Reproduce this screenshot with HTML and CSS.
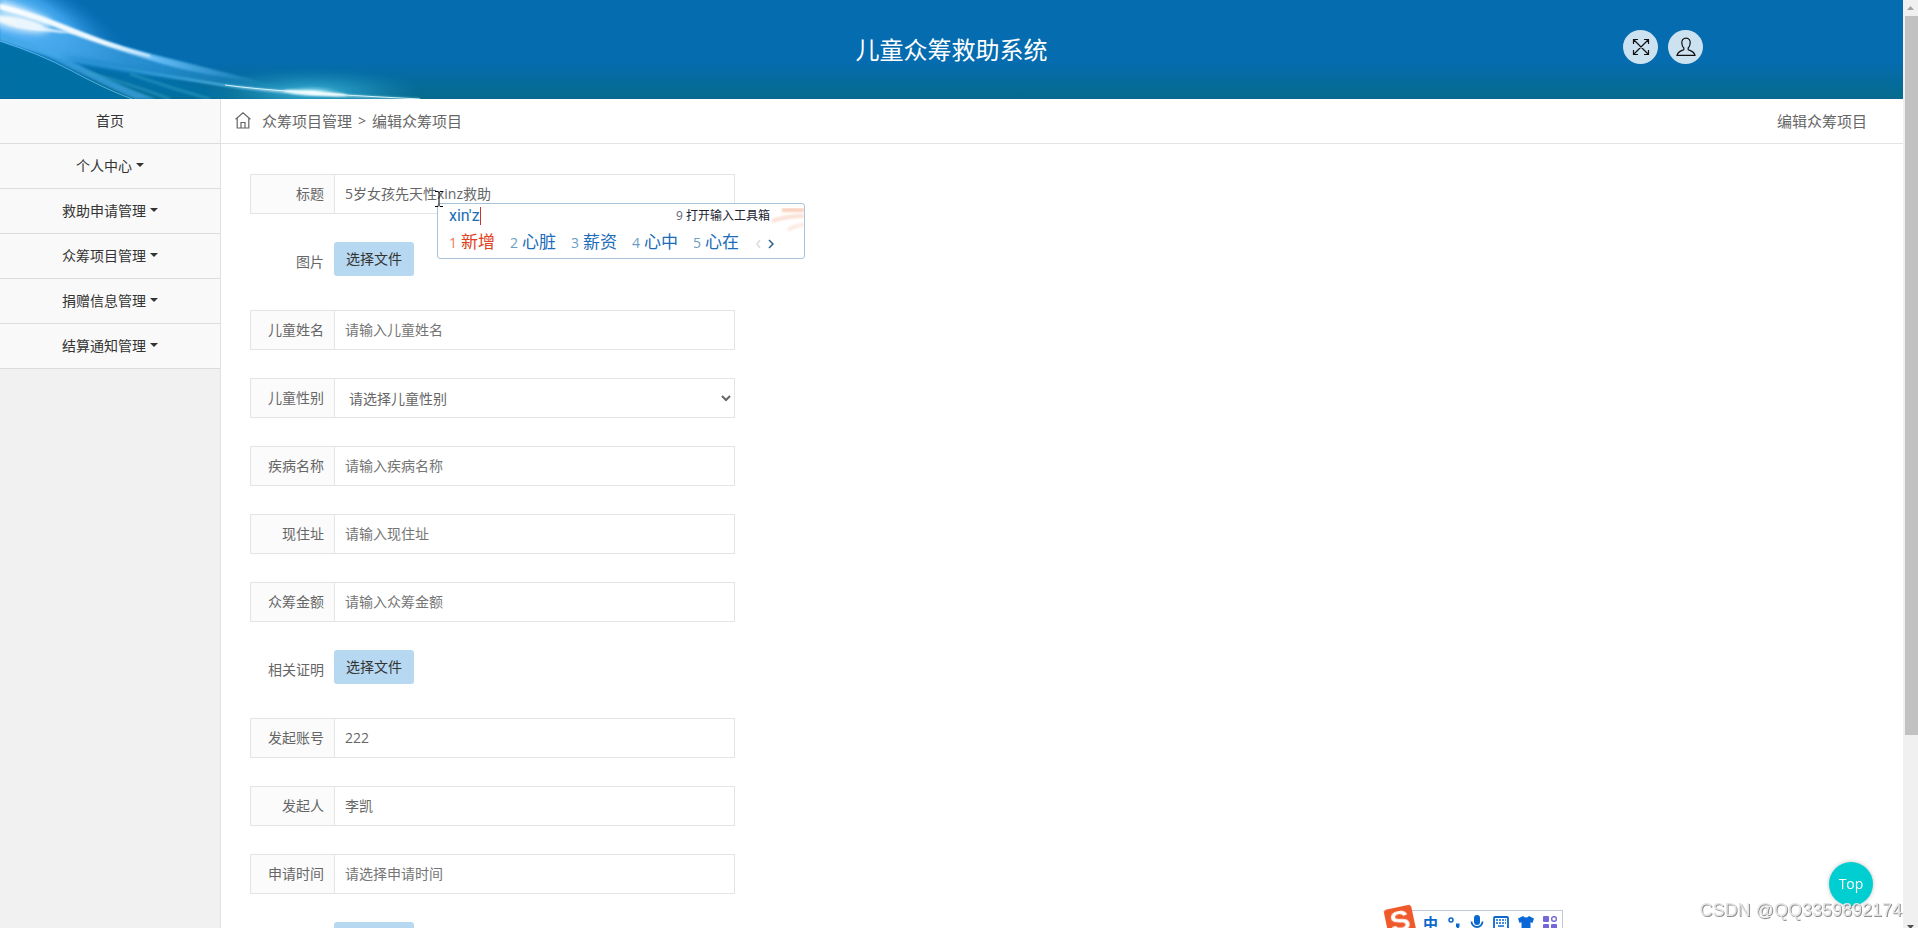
FILE: index.html
```html
<!DOCTYPE html>
<html lang="zh-CN">
<head>
<meta charset="utf-8">
<title>儿童众筹救助系统</title>
<link rel="stylesheet" href="styles.css">
</head>
<body>
<div class="page">
  <header class="header">
    <svg class="header-art" width="520" height="99" viewBox="0 0 520 99" aria-hidden="true">
      <defs>
        <filter id="soft1" x="-20%" y="-50%" width="140%" height="200%"><feGaussianBlur stdDeviation="1"/></filter>
        <filter id="soft3" x="-20%" y="-50%" width="140%" height="200%"><feGaussianBlur stdDeviation="3"/></filter>
        <radialGradient id="glow"><stop offset="0" stop-color="#7accff"/><stop offset=".5" stop-color="#3ea4ee" stop-opacity=".85"/><stop offset="1" stop-color="#1a80cc" stop-opacity="0"/></radialGradient>
        <radialGradient id="flare"><stop offset="0" stop-color="#b8f0fc"/><stop offset=".25" stop-color="#3cb4dc" stop-opacity=".65"/><stop offset="1" stop-color="#1a8cbc" stop-opacity="0"/></radialGradient>
        <linearGradient id="beam" x1="0" x2="1"><stop offset="0" stop-color="#fff"/><stop offset=".4" stop-color="#e0f4ff"/><stop offset=".6" stop-color="#64bcf6"/><stop offset="1" stop-color="#2a90c8" stop-opacity=".2"/></linearGradient>
        <linearGradient id="beam2" x1="0" x2="1"><stop offset="0" stop-color="#2c98e0" stop-opacity=".4"/><stop offset=".45" stop-color="#54b8e4"/><stop offset=".7" stop-color="#fff"/><stop offset="1" stop-color="#7cd4e8" stop-opacity=".4"/></linearGradient>
        <linearGradient id="veil" x1="0" x2="1"><stop offset="0" stop-color="#58b4fa" stop-opacity=".95"/><stop offset=".5" stop-color="#2c94d4" stop-opacity=".75"/><stop offset="1" stop-color="#1a84b4" stop-opacity=".1"/></linearGradient>
      </defs>
      <ellipse cx="24" cy="16" rx="110" ry="40" transform="rotate(24 24 16)" fill="url(#glow)"/>
      <path d="M0 42Q40 54 75 72Q108 90 130 99H0Z" fill="#0670a4" filter="url(#soft1)"/>
      <path d="M0 14Q60 20 100 40Q180 62 270 84L320 93Q190 84 110 70Q50 58 0 40Z" fill="url(#veil)" filter="url(#soft1)"/>
      <path d="M60 56Q120 66 170 78Q200 84 240 99H160Q110 78 60 56Z" fill="#0672b0" opacity=".55" filter="url(#soft3)"/>
      <path d="M0 40Q40 51 70 68Q110 88 135 99H156Q110 82 70 60Q35 44 0 32Z" fill="#43a8e5" opacity=".7" filter="url(#soft1)"/>
      <path d="M0 41Q40 54 70 70Q105 89 132 99" fill="none" stroke="#74ccf4" stroke-width="1" opacity=".7"/>
      <path d="M85 72Q125 82 170 99M130 74Q170 88 210 99" fill="none" stroke="#34a0c8" stroke-width="3" opacity=".5" filter="url(#soft1)"/>
      <ellipse cx="18" cy="23" rx="32" ry="8" transform="rotate(12 18 23)" fill="#c4e4fa" filter="url(#soft3)"/>
      <ellipse cx="20" cy="23" rx="24" ry="5" transform="rotate(12 20 23)" fill="#f2f8fa" filter="url(#soft1)"/>
      <path d="M16 20Q50 31 82 33Q50 34 16 26Z" fill="#e8f6ff" filter="url(#soft1)"/>
      <path d="M0 0Q20 6 50 20L50 26Q20 16 0 12Z" fill="#d4ecfc" filter="url(#soft3)"/>
      <path d="M0 4Q40 14 80 31Q125 49 170 59Q220 71 262 82Q190 74 150 60Q105 46 72 34Q35 18 0 9Z" fill="url(#beam)" filter="url(#soft1)"/>
      <path d="M0 7Q35 15 76 32Q110 46 150 56" stroke="#f4fbff" stroke-width="1.500" fill="none" filter="url(#soft1)"/>
      <ellipse cx="312" cy="92" rx="110" ry="24" fill="url(#flare)"/>
      <path d="M60 58Q145 72 210 83T420 99" stroke="url(#beam2)" stroke-width="2" fill="none" filter="url(#soft1)"/>
      <path d="M225 85Q275 92 420 99" stroke="#d4f4fc" stroke-width="1" fill="none"/>
      <ellipse cx="315" cy="93" rx="32" ry="2" transform="rotate(4 315 93)" fill="#f4ffff" filter="url(#soft1)"/>
    </svg>
    <h1 class="brand">儿童众筹救助系统</h1>
    <div class="actions">
      <button class="round" type="button" aria-label="全屏">
        <svg width="18" height="18" viewBox="0 0 18 18" fill="none" stroke="#111" stroke-width="1.200"><path d="M1.500 1.500L16.500 16.500M16.500 1.500L1.500 16.500M1.500 6V1.500H6M12 1.500h4.500V6M16.500 12v4.500H12M6 16.500H1.500V12"/></svg>
      </button>
      <button class="round" type="button" aria-label="用户">
        <svg width="20" height="20" viewBox="0 0 20 20" fill="none" stroke="#111" stroke-width="1.200"><path d="M10 1.200C7 1.200 5.600 3.200 5.800 6c.1 2.300.8 3.800 2 5v1.700C5.500 13.900 1.800 14.300 1 18.400h18c-.8-4.100-4.500-4.500-6.800-5.700V11c1.200-1.200 1.900-2.700 2-5 .2-2.800-1.200-4.800-4.200-4.800Z"/></svg>
      </button>
    </div>
  </header>

  <div class="body">
    <nav class="sidebar">
      <a class="item" href="#">首页</a>
      <a class="item has-sub" href="#">个人中心</a>
      <a class="item has-sub" href="#">救助申请管理</a>
      <a class="item has-sub" href="#">众筹项目管理</a>
      <a class="item has-sub" href="#">捐赠信息管理</a>
      <a class="item has-sub" href="#">结算通知管理</a>
    </nav>

    <main class="main">
      <div class="crumbs">
        <div class="trail">
          <svg class="home" width="16" height="17" viewBox="0 0 16 17" fill="none" stroke="#666" stroke-width="1.200"><path d="M.6 7.200L8 .9l7.400 6.300M2.200 6v10h11.600V6M6 16v-5.500h4V16"/></svg>
          <span>众筹项目管理</span><span class="sep">&gt;</span><span>编辑众筹项目</span>
        </div>
        <span>编辑众筹项目</span>
      </div>

      <form class="form">
        <div class="row box"><label for="title">标题</label><input id="title" type="text" value="5岁女孩先天性xinz救助"></div>
        <div class="row"><label for="pic">图片</label><button id="pic" class="file" type="button">选择文件</button></div>
        <div class="row box"><label for="name">儿童姓名</label><input id="name" type="text" placeholder="请输入儿童姓名"></div>
        <div class="row box"><label for="sex">儿童性别</label><select id="sex"><option>请选择儿童性别</option></select></div>
        <div class="row box"><label for="ill">疾病名称</label><input id="ill" type="text" placeholder="请输入疾病名称"></div>
        <div class="row box"><label for="addr">现住址</label><input id="addr" type="text" placeholder="请输入现住址"></div>
        <div class="row box"><label for="sum">众筹金额</label><input id="sum" type="text" placeholder="请输入众筹金额"></div>
        <div class="row"><label for="proof">相关证明</label><button id="proof" class="file" type="button">选择文件</button></div>
        <div class="row box"><label for="acct">发起账号</label><input id="acct" type="text" value="222"></div>
        <div class="row box"><label for="who">发起人</label><input id="who" type="text" value="李凯"></div>
        <div class="row box"><label for="when">申请时间</label><input id="when" type="text" placeholder="请选择申请时间"></div>
        <div class="row"><span></span><button class="file" type="button" aria-label="选择文件"></button></div>
      </form>
    </main>
  </div>
</div>

<div class="ime">
  <svg class="ime-art" width="36" height="30" viewBox="0 0 36 30" aria-hidden="true"><defs><filter id="haze"><feGaussianBlur stdDeviation="1"/></filter></defs><g filter="url(#haze)" fill="none" stroke-width="4"><path d="M14 6h22" stroke="#f9cfbc"/><path d="M4 17q14-5 32-5" stroke="#fbe0d6"/><path d="M20 26q8-5 16-5" stroke="#fdeae4"/></g></svg>
  <div class="ime-top"><span class="typed">xin'z</span><span class="tool"><i>9</i> 打开输入工具箱</span></div>
  <div class="ime-list">
    <span class="cand on"><i>1</i>新增</span><span class="cand"><i>2</i>心脏</span><span class="cand"><i>3</i>薪资</span><span class="cand"><i>4</i>心中</span><span class="cand"><i>5</i>心在</span>
    <svg class="arrows" width="20" height="10" viewBox="0 0 20 10" fill="none" stroke-width="1.500"><path d="M6 1L3 5l3 4" stroke="#d8dde2"/><path d="M15 1l4 4-4 4" stroke="#2b5f8c"/></svg>
  </div>
</div>
<svg class="ibeam" width="8" height="16" viewBox="0 0 8 16" fill="none" stroke="#000"><path d="M0 .5h3l1 1 1-1h3M4 1.500v13M0 15.500h3l1-1 1 1h3"/></svg>

<div class="tray">
  <div class="sogou">S</div>
  <div class="tray-bar">
    <span class="zh">中</span>
    <svg width="14" height="14" viewBox="0 0 14 14"><circle cx="4" cy="4" r="2" fill="none" stroke="#0a68cc" stroke-width="1.500"/><path d="M9 7.500h3.500v3L10.500 14H9l1-3H9z" fill="#0a68cc"/></svg>
    <svg width="14" height="16" viewBox="0 0 14 16"><rect x="4" y="0" width="6" height="10" rx="3" fill="#0a68cc"/><path d="M1.500 6.500a5.500 5.500 0 0 0 11 0M7 12v4M4 15h6" fill="none" stroke="#0a68cc" stroke-width="1.800"/></svg>
    <svg width="16" height="14" viewBox="0 0 16 14"><rect x="1" y="1" width="14" height="12" rx="1" fill="none" stroke="#0a68cc" stroke-width="1.800"/><path d="M3 4h10M3 7h10" stroke="#0a68cc" stroke-width="1.500" stroke-dasharray="2 1"/><path d="M5 10h6" stroke="#0a68cc" stroke-width="1.500"/></svg>
    <svg width="16" height="14" viewBox="0 0 16 14"><path d="M5 0q3 3 6 0l5 2.500-1.500 4.500-2-.8V14h-9V6.200l-2 .8L0 2.500z" fill="#0a68d8"/></svg>
    <svg width="14" height="14" viewBox="0 0 14 14" fill="#7468d8"><rect width="6" height="6" rx="1"/><rect x="8.700" y=".7" width="4.600" height="4.600" rx="2" fill="none" stroke="#7468d8" stroke-width="1.400"/><rect y="8" width="6" height="6" rx="1"/><rect x="8" y="8" width="6" height="6" rx="1"/></svg>
  </div>
</div>

<button class="to-top" type="button">Top</button>
<div class="mark">CSDN @QQ3359892174</div>

<div class="scroll" aria-hidden="true">
  <svg width="15" height="16" viewBox="0 0 15 16"><path d="M4 10h7L7.500 6z" fill="#a3a3a3"/></svg>
  <div class="thumb"></div>
  <div class="rest"></div>
  <svg width="15" height="16" viewBox="0 0 15 16"><path d="M4 13h7l-3.500 4z" fill="#505050"/></svg>
</div>
</body>
</html>
```

FILE: styles.css
```css
* { box-sizing: border-box; }

body {
  margin: 0;
  height: 100vh;
  overflow: hidden;
  font-family: "Open Sans", "Noto Sans CJK SC", sans-serif;
  font-size: 14px;
  color: #666;
  background: #fff;
}

i { font-style: normal; }

.page {
  height: 100vh;
  margin-right: 15px;
  display: flex;
  flex-direction: column;
  overflow: hidden;
}

/* header */
.header {
  position: relative;
  flex: none;
  height: 99px;
  display: grid;
  grid-template-columns: 1fr auto 1fr;
  background: linear-gradient(#056cb0 0, #056cb0 62%, #066b8e 98%);
}
.header-art { position: absolute; left: 0; top: 0; }
.brand {
  grid-column: 2;
  align-self: center;
  margin: 0;
  font-size: 24px;
  line-height: 36px;
  font-weight: 400;
  color: #fff;
}
.actions {
  display: flex;
  justify-content: flex-end;
  gap: 10px;
  padding: 30px 200px 0 0;
}
.round {
  width: 35px;
  height: 34px;
  padding: 0;
  border: 0;
  border-radius: 50%;
  background: #cde2f0;
  display: flex;
  align-items: center;
  justify-content: center;
}

/* columns */
.body { flex: 1; display: flex; min-height: 0; }

.sidebar {
  flex: none;
  width: 221px;
  border-right: 1px solid #e2e2e2;
  background: #f1f1f1;
}
.item {
  display: flex;
  align-items: center;
  justify-content: center;
  gap: 4px;
  height: 45px;
  padding-bottom: 2px;
  border-bottom: 1px solid #dcdcdc;
  background: #f9f9f9;
  color: #333;
  text-decoration: none;
}
.has-sub::after {
  content: "";
  border: 4px solid transparent;
  border-top-color: #333;
  border-bottom: 0;
}

.main { flex: 1; min-width: 0; overflow: hidden; }

.crumbs {
  display: flex;
  align-items: center;
  justify-content: space-between;
  height: 45px;
  padding: 0 36px 2px 14px;
  border-bottom: 1px solid #e4e4e4;
  font-size: 15px;
}
.trail { display: flex; align-items: center; }
.home { margin-right: 11px; }
.sep { width: 20px; text-align: center; font-size: 14px; }

/* form */
.form {
  display: flex;
  flex-direction: column;
  gap: 28px;
  width: 514px;
  padding: 30px 0 0 29px;
}
.row {
  display: grid;
  grid-template-columns: 84px 1fr;
  height: 40px;
}
.row label {
  padding-right: 10px;
  text-align: right;
  line-height: 40px;
}
.box { border: 1px solid #e4e4e4; }
.box label {
  border-right: 1px solid #e6e6e6;
  background: #fbfbfb;
  line-height: 38px;
}
.row input,
.row select {
  width: 100%;
  height: 38px;
  padding: 0 10px 2px;
  border: 0;
  outline: 0;
  background: #fff;
  font: inherit;
  color: #666;
}
.row select { padding: 0 2px 0 10px; }
.row input::placeholder { color: #757575; opacity: 1; }
.file {
  justify-self: start;
  width: 80px;
  height: 34px;
  padding: 0 0 2px;
  border: 0;
  border-radius: 3px;
  background: #b7d8f1;
  font: inherit;
  color: #333;
}

/* input method panel */
.ime {
  position: fixed;
  left: 437px;
  top: 203px;
  width: 368px;
  height: 56px;
  padding: 0 34px 0 11px;
  border: 1px solid #a9c4da;
  border-radius: 3px;
  background: #fff;
  color: #1a6cb8;
}
.ime-art { position: absolute; right: 0; top: 0; }
.ime-top { display: flex; justify-content: space-between; height: 24px; line-height: 24px; }
.typed { font-family: Roboto, sans-serif; font-size: 16px; border-right: 1px solid #d03030; height: 18px; line-height: 18px; margin-top: 3px; }
.tool { font-size: 12px; color: #223; }
.tool i { color: #667; }
.ime-list { display: flex; align-items: center; height: 28px; line-height: 28px; }
.cand { flex: none; width: 61px; white-space: nowrap; font-size: 17px; }
.cand i { display: inline-block; width: 12px; font-size: 14px; color: #6d9dc4; }
.cand.on { color: #e04020; }
.cand.on i { color: #ee7a60; }
.arrows { flex: none; margin-top: 4px; }
.ibeam { position: fixed; left: 435px; top: 191px; }

/* input method tray */
.tray { position: fixed; left: 1386px; top: 907px; display: flex; }
.sogou {
  position: relative;
  z-index: 1;
  width: 28px;
  height: 28px;
  border-radius: 3px;
  background: #f0592a;
  color: #fff;
  font: bold 30px/28px "Liberation Sans", Arial, sans-serif;
  text-align: center;
  transform: rotate(-12deg);
}
.tray-bar {
  display: flex;
  align-items: center;
  gap: 9px;
  height: 26px;
  margin: 3px 0 0 -4px;
  padding: 0 5px 0 12px;
  border: 1px solid #c4c8dc;
  background: #fff;
}
.zh { font-size: 15px; line-height: 20px; font-weight: 700; color: #0a68cc; }

/* floating */
.to-top {
  position: fixed;
  right: 45px;
  bottom: 22px;
  width: 44px;
  height: 44px;
  padding: 0;
  border: 0;
  border-radius: 50%;
  background: #00ced1;
  box-shadow: 0 0 4px rgba(0, 0, 0, .25);
  color: #fff;
  font: 14px/44px "Open Sans", sans-serif;
}
.mark {
  position: fixed;
  right: 16px;
  bottom: 7px;
  font: 18px/22px "Liberation Sans", Arial, sans-serif;
  color: #e6e6e6;
  text-shadow: 1px 1px 0 #909090;
}

/* scroll bar */
.scroll {
  position: fixed;
  right: 0;
  top: 0;
  bottom: 0;
  width: 15px;
  display: flex;
  flex-direction: column;
  background: #f0f0f0;
}
.thumb { flex: 719; margin-left: 2px; background: #c1c1c1; }
.rest { flex: 177; }
```
